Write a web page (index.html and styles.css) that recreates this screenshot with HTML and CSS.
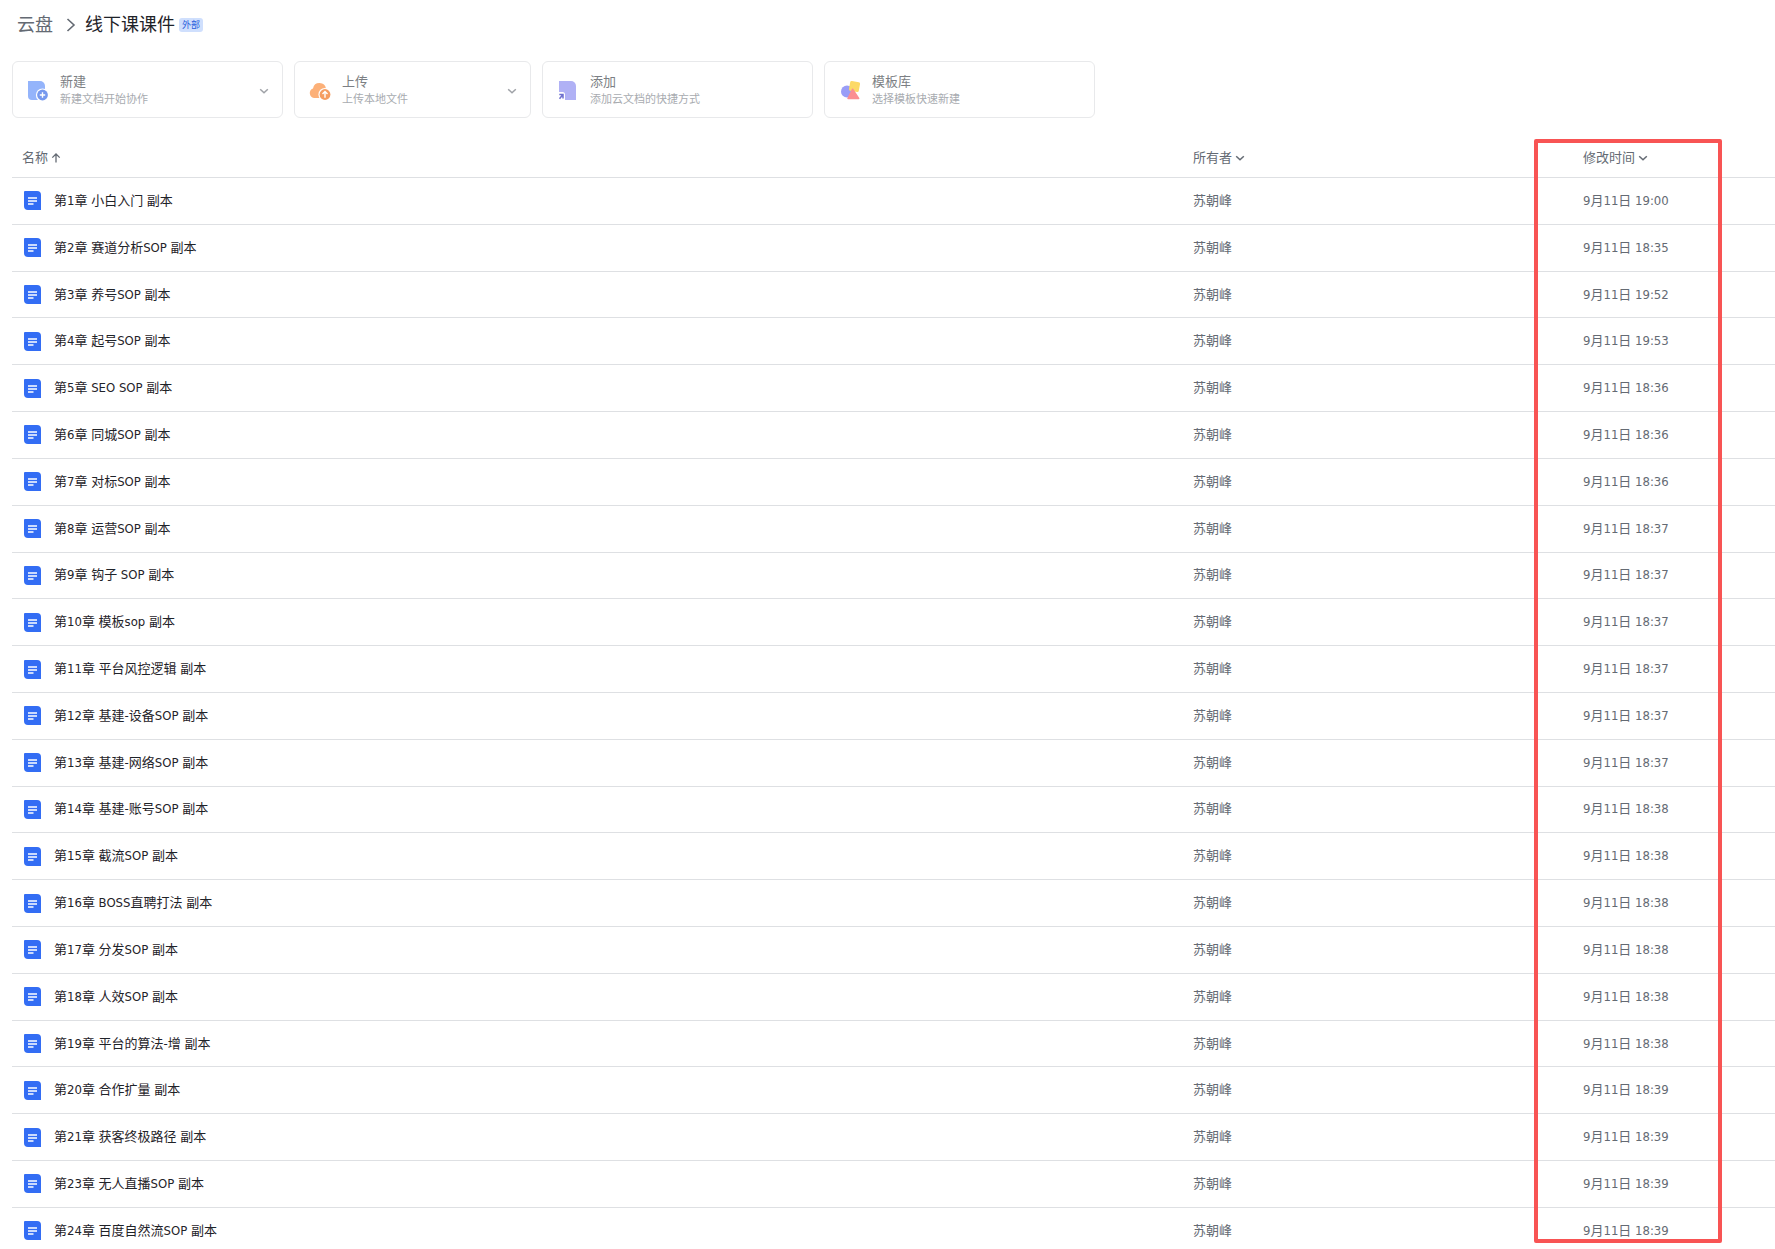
FILE: index.html
```html
<!DOCTYPE html>
<html lang="zh-CN">
<head>
    <meta charset="UTF-8">
    <meta name="viewport" content="width=device-width, initial-scale=1.0">
    <title>线下课课件 - 云盘</title>
    <link rel="stylesheet" href="styles.css">
</head>
<body>
    <!-- Shared icons -->
    <svg class="sprite" aria-hidden="true">
        <symbol id="doc" viewBox="0 0 17 19">
            <path d="M1 0h12a4 4 0 0 1 4 4v15H4a4 4 0 0 1-4-4V1a1 1 0 0 1 1-1z" fill="#336df4"/>
            <path d="M4 7h9M4 10h9M4 13h5.5" stroke="#fff" stroke-width="1.3" fill="none"/>
        </symbol>
        <symbol id="chevron" viewBox="0 0 10 10">
            <path d="M1.2 3.2 5 6.8l3.8-3.6" fill="none" stroke="currentColor" stroke-width="1.5"/>
        </symbol>
        <symbol id="arrow-up" viewBox="0 0 10 10">
            <path d="M5 9.5V1M1.3 4.6 5 1l3.7 3.6" fill="none" stroke="currentColor" stroke-width="1.3"/>
        </symbol>
    </svg>

    <main class="drive">
        <nav class="breadcrumb">
            <a href="#">云盘</a>
            <svg class="separator" viewBox="0 0 10 14"><path d="M1.5 1 8 7l-6.5 6" fill="none" stroke="currentColor" stroke-width="1.6"/></svg>
            <h1>线下课课件</h1>
            <span class="tag">外部</span>
        </nav>

        <div class="toolbar">
            <button type="button" class="action">
                <svg class="action-icon" viewBox="0 0 22 22">
                    <path d="M1 1h12a5 5 0 0 1 5 5v14H5a4 4 0 0 1-4-4z" fill="#94b4fb"/>
                    <circle cx="15.5" cy="15" r="6.6" fill="#fff"/>
                    <circle cx="15.5" cy="15" r="5.4" fill="#7699ee"/>
                    <path d="M15.5 12.3v5.4M12.8 15h5.4" stroke="#fff" stroke-width="1.4"/>
                </svg>
                <span class="action-text"><span class="action-title">新建</span><span class="action-desc">新建文档开始协作</span></span>
                <svg class="chevron"><use href="#chevron"/></svg>
            </button>
            <button type="button" class="action action-narrow">
                <svg class="action-icon" viewBox="0 0 22 22">
                    <path d="M5 18a5 5 0 0 1-1-9.6 6.6 6.6 0 0 1 13 .3A4.8 4.8 0 0 1 17 18z" fill="#fcb078"/>
                    <circle cx="16" cy="14.5" r="6.6" fill="#fff"/>
                    <circle cx="16" cy="14.5" r="5.4" fill="#f59d61"/>
                    <path d="M16 17.8v-6M13.5 14l2.5-2.5 2.5 2.5" fill="none" stroke="#fff" stroke-width="1.4"/>
                </svg>
                <span class="action-text"><span class="action-title">上传</span><span class="action-desc">上传本地文件</span></span>
                <svg class="chevron"><use href="#chevron"/></svg>
            </button>
            <button type="button" class="action">
                <svg class="action-icon" viewBox="0 0 22 22">
                    <path d="M2 1h12a5 5 0 0 1 5 5v14H2z" fill="#b0b1f5"/>
                    <path d="M1 12h4.500a2.500 2.500 0 0 1 2.500 2.500V20.500H1z" fill="#fff"/>
                    <path d="M2.500 18.800 5.500 15M2.300 14.500h3.700v4" fill="none" stroke="#6e70cf" stroke-width="1.500"/>
                </svg>
                <span class="action-text"><span class="action-title">添加</span><span class="action-desc">添加云文档的快捷方式</span></span>
            </button>
            <button type="button" class="action">
                <svg class="action-icon" viewBox="0 0 22 22">
                    <circle cx="8" cy="11.500" r="6" fill="#999df7"/>
                    <rect x="10.500" y="1.500" width="10" height="10" rx="1.500" transform="rotate(10 15.500 6.500)" fill="#fcd966"/>
                    <path d="M14.200 8.800 20.300 18a.8.8 0 0 1-.6 1.200H9a.8.8 0 0 1-.6-1.200l4.600-9.200a.8.8 0 0 1 1.200 0z" fill="#fb8f92"/>
                </svg>
                <span class="action-text"><span class="action-title">模板库</span><span class="action-desc">选择模板快速新建</span></span>
            </button>
        </div>

        <div class="table-wrap">
            <table class="files">
                <colgroup>
                    <col>
                    <col class="col-owner">
                    <col class="col-time">
                </colgroup>
                <thead>
                    <tr>
                        <th><button type="button" class="sort">名称<svg><use href="#arrow-up"/></svg></button></th>
                        <th><button type="button" class="sort">所有者<svg><use href="#chevron"/></svg></button></th>
                        <th><button type="button" class="sort">修改时间<svg><use href="#chevron"/></svg></button></th>
                    </tr>
                </thead>
                <tbody>
                    <tr><td><a href="#" class="file"><svg><use href="#doc"/></svg>第1章 小白入门 副本</a></td><td>苏朝峰</td><td>9月11日 19:00</td></tr>
                    <tr><td><a href="#" class="file"><svg><use href="#doc"/></svg>第2章 赛道分析SOP 副本</a></td><td>苏朝峰</td><td>9月11日 18:35</td></tr>
                    <tr><td><a href="#" class="file"><svg><use href="#doc"/></svg>第3章 养号SOP 副本</a></td><td>苏朝峰</td><td>9月11日 19:52</td></tr>
                    <tr><td><a href="#" class="file"><svg><use href="#doc"/></svg>第4章 起号SOP 副本</a></td><td>苏朝峰</td><td>9月11日 19:53</td></tr>
                    <tr><td><a href="#" class="file"><svg><use href="#doc"/></svg>第5章 SEO SOP 副本</a></td><td>苏朝峰</td><td>9月11日 18:36</td></tr>
                    <tr><td><a href="#" class="file"><svg><use href="#doc"/></svg>第6章 同城SOP 副本</a></td><td>苏朝峰</td><td>9月11日 18:36</td></tr>
                    <tr><td><a href="#" class="file"><svg><use href="#doc"/></svg>第7章 对标SOP 副本</a></td><td>苏朝峰</td><td>9月11日 18:36</td></tr>
                    <tr><td><a href="#" class="file"><svg><use href="#doc"/></svg>第8章 运营SOP 副本</a></td><td>苏朝峰</td><td>9月11日 18:37</td></tr>
                    <tr><td><a href="#" class="file"><svg><use href="#doc"/></svg>第9章 钩子 SOP 副本</a></td><td>苏朝峰</td><td>9月11日 18:37</td></tr>
                    <tr><td><a href="#" class="file"><svg><use href="#doc"/></svg>第10章 模板sop 副本</a></td><td>苏朝峰</td><td>9月11日 18:37</td></tr>
                    <tr><td><a href="#" class="file"><svg><use href="#doc"/></svg>第11章 平台风控逻辑 副本</a></td><td>苏朝峰</td><td>9月11日 18:37</td></tr>
                    <tr><td><a href="#" class="file"><svg><use href="#doc"/></svg>第12章 基建-设备SOP 副本</a></td><td>苏朝峰</td><td>9月11日 18:37</td></tr>
                    <tr><td><a href="#" class="file"><svg><use href="#doc"/></svg>第13章 基建-网络SOP 副本</a></td><td>苏朝峰</td><td>9月11日 18:37</td></tr>
                    <tr><td><a href="#" class="file"><svg><use href="#doc"/></svg>第14章 基建-账号SOP 副本</a></td><td>苏朝峰</td><td>9月11日 18:38</td></tr>
                    <tr><td><a href="#" class="file"><svg><use href="#doc"/></svg>第15章 截流SOP 副本</a></td><td>苏朝峰</td><td>9月11日 18:38</td></tr>
                    <tr><td><a href="#" class="file"><svg><use href="#doc"/></svg>第16章 BOSS直聘打法 副本</a></td><td>苏朝峰</td><td>9月11日 18:38</td></tr>
                    <tr><td><a href="#" class="file"><svg><use href="#doc"/></svg>第17章 分发SOP 副本</a></td><td>苏朝峰</td><td>9月11日 18:38</td></tr>
                    <tr><td><a href="#" class="file"><svg><use href="#doc"/></svg>第18章 人效SOP 副本</a></td><td>苏朝峰</td><td>9月11日 18:38</td></tr>
                    <tr><td><a href="#" class="file"><svg><use href="#doc"/></svg>第19章 平台的算法-增 副本</a></td><td>苏朝峰</td><td>9月11日 18:38</td></tr>
                    <tr><td><a href="#" class="file"><svg><use href="#doc"/></svg>第20章 合作扩量 副本</a></td><td>苏朝峰</td><td>9月11日 18:39</td></tr>
                    <tr><td><a href="#" class="file"><svg><use href="#doc"/></svg>第21章 获客终极路径 副本</a></td><td>苏朝峰</td><td>9月11日 18:39</td></tr>
                    <tr><td><a href="#" class="file"><svg><use href="#doc"/></svg>第23章 无人直播SOP 副本</a></td><td>苏朝峰</td><td>9月11日 18:39</td></tr>
                    <tr><td><a href="#" class="file"><svg><use href="#doc"/></svg>第24章 百度自然流SOP 副本</a></td><td>苏朝峰</td><td>9月11日 18:39</td></tr>
                </tbody>
            </table>
            <div class="highlight"></div>
        </div>
    </main>
</body>
</html>
```
FILE: styles.css
```css
:root {
    --text-color: #1f2329;
    --text-secondary: #646a73;
    --border-color: #dee0e3;
    --highlight-color: #f85454;
}

* {
    margin: 0;
    padding: 0;
    box-sizing: border-box;
}

body {
    background-color: #fff;
    color: var(--text-color);
    font-family: "DejaVu Sans Condensed", "Noto Sans CJK SC", sans-serif;
    font-size: 13px;
    line-height: 18px;
}

button {
    background: none;
    border: none;
    color: inherit;
    font: inherit;
    text-align: left;
    cursor: pointer;
}

a {
    color: inherit;
    text-decoration: none;
}

.sprite {
    display: none;
}

.drive {
    height: 100vh;
    padding: 13px 0 0 12px;
    overflow-y: auto;
    scrollbar-width: none;
}

/* Breadcrumb */
.breadcrumb {
    display: flex;
    align-items: center;
    height: 24px;
    padding-left: 5px;
    font-size: 18px;
    line-height: 24px;
    color: var(--text-secondary);
}

.breadcrumb h1 {
    font-size: 18px;
    font-weight: 400;
    color: var(--text-color);
}

.separator {
    width: 10px;
    height: 14px;
    margin: 0 9px 0 13px;
}

.tag {
    margin-left: 4px;
    padding: 0 3px;
    border-radius: 3px;
    background-color: #cfdffd;
    color: #245bdb;
    font-size: 9px;
    line-height: 14px;
}

/* Action cards */
.toolbar {
    display: flex;
    gap: 11px;
    margin: 24px 0 20px;
}

.action {
    display: flex;
    align-items: center;
    width: 271px;
    height: 57px;
    padding: 2px 13px 0 14px;
    border: 1px solid #e8e9eb;
    border-radius: 6px;
}

.action-narrow {
    width: 237px;
}

.action-icon {
    width: 22px;
    height: 22px;
    margin-right: 11px;
}

.action-text {
    flex: 1;
}

.action-title,
.action-desc {
    display: block;
}

.action-title {
    color: #7c7f84;
}

.action-desc {
    color: #a8abb0;
    font-size: 11px;
}

.chevron {
    width: 10px;
    height: 10px;
    color: #9fa2a7;
}

/* File list */
.table-wrap {
    position: relative;
}

.files {
    width: 100%;
    height: calc(100vh - 132px);
    border-collapse: separate;
    border-spacing: 0;
    table-layout: fixed;
}

.col-owner {
    width: 390px;
}

.col-time {
    width: 192px;
}

.files th,
.files td {
    border-bottom: 1px solid var(--border-color);
    color: var(--text-secondary);
    font-weight: 400;
    text-align: left;
    vertical-align: middle;
    white-space: nowrap;
}

.files th {
    height: 40px;
}

.files th:first-child {
    padding-left: 10px;
}

.files td:first-child {
    padding-left: 12px;
}

.sort {
    display: flex;
    align-items: center;
    gap: 3px;
}

.sort svg {
    width: 10px;
    height: 10px;
}

.file {
    display: flex;
    align-items: center;
    gap: 13px;
    color: var(--text-color);
}

.file svg {
    width: 17px;
    height: 19px;
}

/* Frame around the modified-time column */
.highlight {
    position: absolute;
    top: 1px;
    right: 53px;
    bottom: 12px;
    width: 188px;
    border: 4px solid var(--highlight-color);
    border-radius: 2px;
    pointer-events: none;
}
```
